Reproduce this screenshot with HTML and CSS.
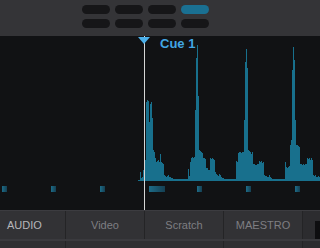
FILE: index.html
```html
<!DOCTYPE html>
<html lang="en">
<head>
    <meta charset="UTF-8">
    <title>Deck</title>
    <link rel="stylesheet" href="styles.css">
</head>
<body>
    <div class="deck">
        <div class="top-bar">
            <div class="pads">
                <span class="pad"></span><span class="pad"></span><span class="pad"></span><span class="pad active"></span>
                <span class="pad"></span><span class="pad"></span><span class="pad"></span><span class="pad"></span>
            </div>
        </div>
        <div class="wave-area">
            <svg class="wave" width="320" height="174" viewBox="0 0 320 174">
                <defs>
                    <linearGradient id="mk" x1="0" x2="1" y1="0" y2="0">
                        <stop offset="0" stop-color="#1d6c88"/>
                        <stop offset="1" stop-color="#153f52"/>
                    </linearGradient>
                </defs>
                <path id="wavePath" fill="#18708d" d=""/>
                <g id="markers" fill="url(#mk)"></g>
                <line x1="144.5" y1="0" x2="144.5" y2="174" stroke="#d6d6d6" stroke-width="1"/>
                <polygon points="138,1 150,1 144,8" fill="#4cb0ea"/>
            </svg>
            <span class="cue-label">Cue 1</span>
        </div>
        <div class="tabs">
            <div class="tab-row">
                <div class="tab current">AUDIO</div>
                <div class="tab">Video</div>
                <div class="tab">Scratch</div>
                <div class="tab">MAESTRO</div>
                <div class="tab-rest"><div class="rest-block"></div></div>
            </div>
            <div class="sub-row">
                <div class="sub-cell first"></div>
                <div class="sub-cell wide"></div>
                <div class="sub-cell"></div>
            </div>
        </div>
    </div>

    <script>
        // waveform: each segment starts at an x and lists one height per pixel
        const segments = [
            [140, [8, 2, 3, 10, 0, 20, 78, 80, 79, 58, 76, 78, 62, 30, 28, 22, 18, 19, 20, 18, 26, 18, 17, 16, 5, 4, 3, 4, 5, 3, 3, 2, 2]],
            [188, [11, 4, 18, 22, 23, 22, 23, 70, 122, 135, 84, 30, 29, 28, 27, 22, 22, 21, 12, 12, 10, 10, 22, 21, 22, 21, 20, 8, 6, 5, 4, 6, 5, 3, 2, 2]],
            [236, [19, 18, 27, 28, 28, 27, 28, 28, 60, 118, 131, 112, 30, 29, 28, 26, 28, 16, 16, 15, 15, 16, 16, 19, 18, 19, 17, 18, 5, 4, 4, 3, 3, 5, 3, 2]],
            [285, [18, 13, 12, 13, 14, 35, 40, 110, 133, 120, 60, 35, 35, 34, 33, 16, 16, 15, 16, 15, 16, 16, 22, 21, 22, 20, 22, 20, 5, 4, 5, 3, 3, 4, 3]]
        ];
        const heights = {};
        for (let x = 138; x < 320; x++) heights[x] = x < 140 ? 0 : 1;
        segments.forEach(([start, list]) => {
            list.forEach((h, i) => { heights[start + i] = h; });
        });

        const base = 144;
        let d = `M138 ${base}`;
        for (let x = 138; x < 320; x++) {
            d += ` V${base - heights[x]} H${x + 1}`;
        }
        d += ` V${base + 1} H138 Z`;
        document.getElementById('wavePath').setAttribute('d', d);

        const markers = [[2, 5], [51, 5], [100, 5], [149, 16], [197, 5], [246, 5], [295, 5]];
        const group = document.getElementById('markers');
        markers.forEach(([x, w]) => {
            const r = document.createElementNS('http://www.w3.org/2000/svg', 'rect');
            r.setAttribute('x', x);
            r.setAttribute('y', 150);
            r.setAttribute('width', w);
            r.setAttribute('height', 6);
            group.appendChild(r);
        });
    </script>
</body>
</html>
```

FILE: styles.css
```css
body {
    margin: 0;
    padding: 0;
    background-color: #111214;
    font-family: "Liberation Sans", Arial, sans-serif;
    overflow: hidden;
}

.deck {
    display: flex;
    flex-direction: column;
    width: 320px;
    height: 248px;
}

.top-bar {
    height: 37px;
    background-color: #343437;
    box-sizing: border-box;
    padding: 5px 0 0 82px;
}

.pads {
    display: grid;
    grid-template-columns: repeat(4, 28px);
    column-gap: 5px;
    row-gap: 5px;
}

.pad {
    height: 9px;
    border-radius: 5px;
    background-color: #161618;
}

.pad.active {
    background-color: #1a7092;
}

.wave-area {
    position: relative;
    height: 174px;
    background-color: #111214;
}

.wave {
    display: block;
}

.cue-label {
    position: absolute;
    left: 160px;
    top: 0px;
    font-size: 13px;
    font-weight: bold;
    color: #42a6e4;
    line-height: 15px;
}

.tabs {
    flex: 1;
    background-color: #2c2c2f;
    border-top: 1px solid #3c3c40;
}

.tab-row {
    display: flex;
    height: 28px;
    border-bottom: 2px solid #3a3a3e;
}

.tab {
    width: 78px;
    background-color: #323235;
    border-right: 1px solid #242426;
    color: #7e7e82;
    font-size: 11px;
    line-height: 28px;
    text-align: center;
}

.tab.current {
    width: 58px;
    padding-left: 7px;
    text-align: left;
    color: #b6b6ba;
}

.tab-rest {
    flex: 1;
    display: flex;
    justify-content: flex-end;
    padding-top: 10px;
}

.rest-block {
    width: 5px;
    background-color: #0e0e10;
}

.sub-row {
    display: flex;
    height: 7px;
    width: 303px;
}

.sub-cell {
    width: 78px;
    background-color: #2f2f32;
    border-right: 1px solid #242426;
}

.sub-cell.first {
    width: 65px;
}

.sub-cell.wide {
    width: 157px;
}
```
